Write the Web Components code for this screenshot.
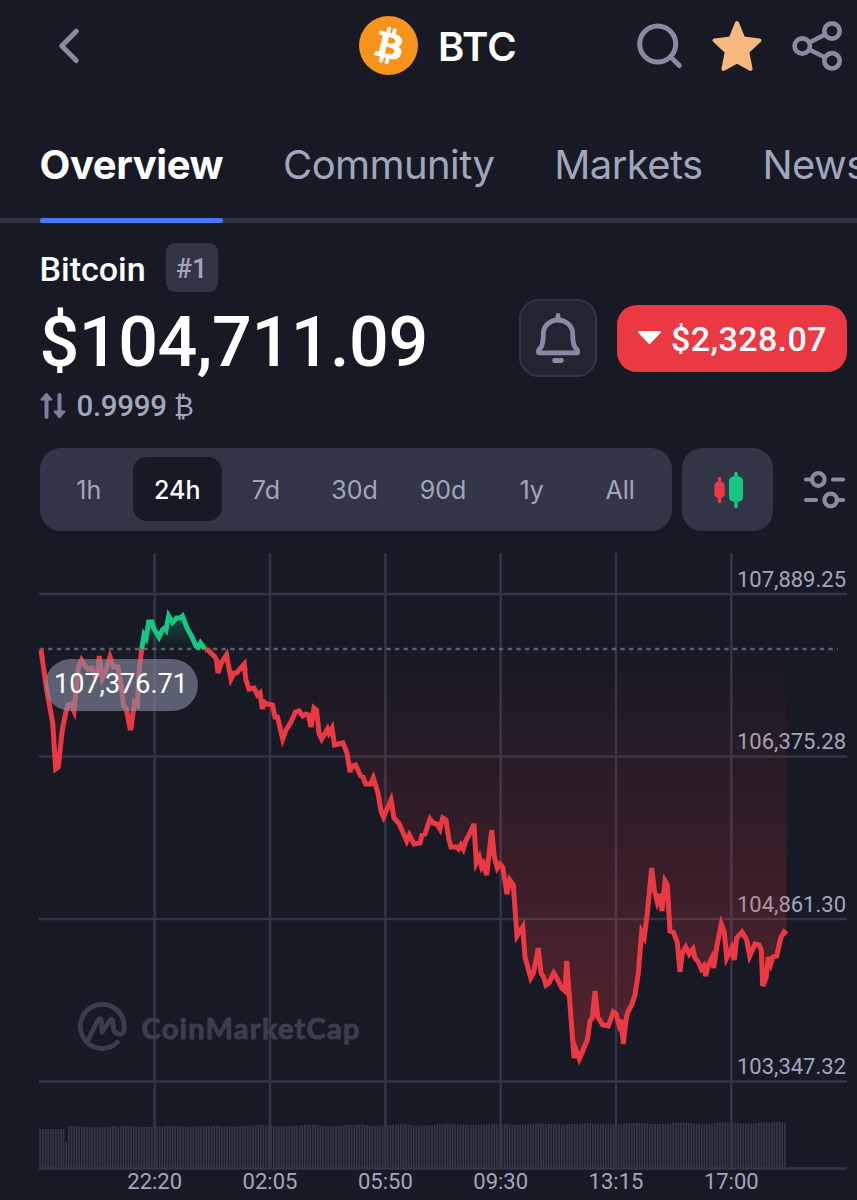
<!DOCTYPE html>
<html lang="en">
<head>
<meta charset="utf-8">
<title>BTC</title>
<style>
    html, body {
        margin: 0;
        background: #171924;
    }
    body {
        width: 857px;
        height: 1200px;
        overflow: hidden;
        color: #fff;
        font-family: Roboto, "Liberation Sans", sans-serif;
        --muted: #a1a7bb;
        --panel: #323546;
        --red: #ea3943;
    }
</style>
</head>
<body>
    <coin-page>
        <coin-header symbol="BTC"></coin-header>
        <coin-tabs>
            <coin-tab active>Overview</coin-tab>
            <coin-tab>Community</coin-tab>
            <coin-tab>Markets</coin-tab>
            <coin-tab>News</coin-tab>
        </coin-tabs>
        <coin-price>
            <span slot="name">Bitcoin</span>
            <span slot="rank">#1</span>
            <span slot="price">$104,711.09</span>
            <span slot="change">$2,328.07</span>
            <span slot="amount">0.9999 <span style="font-size: 27px; font-weight: 400">₿</span></span>
        </coin-price>
        <chart-controls ranges="1h,24h,7d,30d,90d,1y,All" selected="24h"></chart-controls>
        <price-chart></price-chart>
    </coin-page>

<script>
(function() {
    function define(name, html, setup) {
        const template = document.createElement("template");
        template.innerHTML = html;
        customElements.define(name, class extends HTMLElement {
            constructor() {
                super();
                this.attachShadow({mode: "open"});
                this.shadowRoot.appendChild(template.content.cloneNode(true));
            }

            connectedCallback() {
                if (setup) setup(this, this.shadowRoot);
            }
        });
    }

    define("coin-page", `
        <style>
            :host { display: flex; flex-direction: column; width: 857px; height: 1200px; overflow: hidden; }
        </style>
        <slot></slot>
    `);

    define("coin-header", `
        <style>
            :host { display: grid; grid-template-columns: 359px 1fr auto; align-items: center; height: 92px; box-sizing: border-box; padding-right: 14px; font-family: Inter, sans-serif; }
            svg { display: block; }
            .back { margin-left: 54px; }
            .coin { display: flex; align-items: center; gap: 20px; margin-top: -1px; font-size: 40px; font-weight: 600; line-height: 48px; }
            #symbol { padding-top: 3px; }
            .actions { display: flex; align-items: center; gap: 26px; }
        </style>
        <svg class="back" width="30" height="40" viewBox="54 26 30 40" fill="none" stroke="#858ca2" stroke-width="5" stroke-linecap="round" stroke-linejoin="round"><path d="M76.300 31.200 61.700 46 76.300 60.500"/></svg>
        <div class="coin">
            <svg width="59" height="59" viewBox="0 0 32 32"><circle cx="16" cy="16" r="16" fill="#f7931a"/><path fill="#fff" stroke="#fff" stroke-width=".3" d="M23.189 14.02c.314-2.096-1.283-3.223-3.465-3.975l.708-2.84-1.728-.43-.69 2.765c-.454-.114-.92-.22-1.385-.326l.695-2.783L15.596 6l-.708 2.839c-.376-.086-.746-.17-1.104-.26l.002-.009-2.384-.595-.46 1.846s1.283.294 1.256.312c.7.175.826.638.805 1.006l-.806 3.235c.048.012.11.03.18.057l-.183-.045-1.13 4.532c-.086.212-.303.531-.793.41.018.025-1.256-.313-1.256-.313l-.858 1.978 2.25.561c.418.105.828.215 1.231.318l-.715 2.872 1.727.43.708-2.84c.472.127.93.245 1.378.357l-.706 2.828 1.728.43.715-2.866c2.948.558 5.164.333 6.097-2.333.752-2.146-.037-3.385-1.588-4.192 1.13-.26 1.98-1.003 2.207-2.538zm-3.95 5.538c-.533 2.147-4.148.986-5.32.695l.95-3.805c1.172.293 4.929.872 4.37 3.11zm.535-5.569c-.487 1.953-3.495.96-4.47.717l.86-3.45c.975.243 4.118.696 3.61 2.733z"/></svg>
            <span id="symbol"></span>
        </div>
        <div class="actions">
            <svg width="50" height="52" viewBox="635 20 50 52" fill="none" stroke="#858ca2" stroke-width="5" stroke-linecap="round"><circle cx="657.700" cy="44" r="18"/><path d="m671.300 57.600 8 8"/></svg>
            <svg width="52" height="54" viewBox="711 19 52 54" fill="#f5b97f" stroke="#f5b97f" stroke-width="4" stroke-linejoin="round"><path d="m737 23 6.300 15.500 16.200 1.900-12.300 11.500 3.400 17-13.600-7.300-13.600 7.300 3.400-17-12.300-11.500 16.200-1.900z"/></svg>
            <svg width="54" height="54" viewBox="789 19 54 54" fill="none" stroke="#858ca2" stroke-width="4.700"><circle cx="802.300" cy="46" r="7.700"/><circle cx="832" cy="31" r="7.700"/><circle cx="832" cy="60.800" r="7.700"/><path d="m809.200 42.500 16-8M809.200 49.500l16 8"/></svg>
        </div>
    `, (host, root) => {
        root.getElementById("symbol").textContent = host.getAttribute("symbol");
    });

    define("coin-tabs", `
        <style>
            :host { display: flex; align-items: stretch; gap: 60px; height: 131px; box-sizing: border-box; padding: 26px 0 0 39.500px; overflow: hidden; white-space: nowrap; background: linear-gradient(#323546, #323546) bottom / 100% 5px no-repeat; }
        </style>
        <slot></slot>
    `);

    define("coin-tab", `
        <style>
            :host { display: flex; flex-direction: column; justify-content: space-between; flex: none; color: var(--muted); font: 400 40px/93px Inter, sans-serif; letter-spacing: -.6px; }
            :host([active]) { color: #fff; font-weight: 700; letter-spacing: -.42px; }
            .bar { height: 5px; border-radius: 3px; }
            :host([active]) .bar { background: #4878f5; }
        </style>
        <slot></slot>
        <div class="bar"></div>
    `);

    define("coin-price", `
        <style>
            :host { display: grid; grid-template-rows: 49px 92px 44px; padding: 20px 10px 0 39.500px; font-weight: 500; }
            div { display: flex; align-items: center; }
            svg { display: block; }
            .title { font-size: 34px; gap: 20px; }
            .title slot[name="name"] { display: block; padding-top: 2px; }
            .rank { justify-content: center; width: 52px; height: 49px; border-radius: 9px; background: var(--panel); color: var(--muted); font-size: 27px; }
            .rank slot { display: block; padding-top: 2px; }
            .main { justify-content: space-between; }
            .price { font-size: 70px; line-height: 82px; padding-top: 8px; letter-spacing: -.45px; }
            .side { gap: 20px; }
            .bell { justify-content: center; width: 78px; height: 78px; box-sizing: border-box; border: 2px solid var(--panel); border-radius: 20px; background: #222531; }
            .change { gap: 9px; width: 230px; height: 67px; box-sizing: border-box; padding-left: 20px; border-radius: 20px; background: var(--red); font-size: 34px; letter-spacing: .4px; }
            .change slot { display: block; padding-top: 2px; }
            .amount { gap: 10px; color: var(--muted); font-size: 29.500px; letter-spacing: -.3px; }
        </style>
        <div class="title"><slot name="name"></slot><div class="rank"><slot name="rank"></slot></div></div>
        <div class="main">
            <div class="price"><slot name="price"></slot></div>
            <div class="side">
                <div class="bell"><svg width="50" height="56" viewBox="533 310 50 56" fill="none" stroke="#858ca2" stroke-width="4.800" stroke-linecap="round" stroke-linejoin="round"><path d="M558 315.500v4M543.300 334a14.700 14 0 0 1 29.400 0c0 6 .3 10 2.300 13.200.8 1.200 2.500 2 2.500 3.300v2.300H538.500v-2.300c0-1.300 1.700-2.100 2.500-3.300 2-3.200 2.300-7.200 2.300-13.200zM554.500 360.500h7"/></svg></div>
                <div class="change"><svg width="25" height="16" viewBox="0 0 25 16" fill="#fff" stroke="#fff" stroke-width="2" stroke-linejoin="round"><path d="M2 2h21L12.500 13z"/></svg><slot name="change"></slot></div>
            </div>
        </div>
        <div class="amount"><svg width="27" height="28" viewBox="0 0 27 28" fill="none" stroke="#78819a" stroke-width="4" stroke-linecap="round" stroke-linejoin="round"><path d="M6.500 25V4M19.500 3v21"/><path d="M1.500 7.500 6.500 2l5 5.500zM14.500 19.500l5 5.500 5-5.500z" fill="#78819a" stroke-width="2"/></svg><slot name="amount"></slot></div>
    `);

    define("chart-controls", `
        <style>
            :host { display: flex; height: 83px; margin-top: 20px; padding: 0 11px 0 39.500px; }
            #ranges { display: grid; grid-template-columns: repeat(7, 1fr); align-items: center; width: 632px; box-sizing: border-box; padding: 0 7px 1px 5px; border-radius: 21px; background: var(--panel); color: var(--muted); font: 400 25px/66px Inter, sans-serif; text-align: center; }
            #ranges span { height: 64px; }
            .selected { border-radius: 14px; background: #171924; color: #fff; font-weight: 500; }
            .kind { display: flex; align-items: center; justify-content: center; width: 91px; margin-left: 10.500px; border-radius: 20px; background: var(--panel); }
            .filter { align-self: center; margin-left: auto; }
        </style>
        <div id="ranges"></div>
        <div class="kind"><svg width="32" height="40" viewBox="712 469.500 32 40"><path d="M719.500 478v23" stroke="#ea3943" stroke-width="3.500" stroke-linecap="round"/><rect x="714.300" y="481" width="10.400" height="16.500" rx="4.500" fill="#ea3943"/><path d="M736 473v33" stroke="#16c784" stroke-width="3.500" stroke-linecap="round"/><rect x="729" y="476" width="14" height="25" rx="4.500" fill="#16c784"/></svg></div>
        <svg class="filter" width="43" height="42" viewBox="803 469 43 42" fill="none" stroke="#858ca2" stroke-width="4.200" stroke-linecap="round"><circle cx="818.300" cy="479.500" r="6.300"/><circle cx="830.700" cy="500" r="6.300"/><path d="M806 479.500h5M833 479.500h10M806 500h10M838 500h5"/></svg>
    `, (host, root) => {
        host.getAttribute("ranges").split(",").forEach(range => {
            const item = document.createElement("span");
            item.textContent = range;
            if (range === host.getAttribute("selected")) item.className = "selected";
            root.getElementById("ranges").appendChild(item);
        });
    });

    // Price line, split where it crosses the opening price
    const open = 649;
    const early = "41,650 46.700,690 52.700,723 55.700,769 58.300,767 62.300,730 65.700,713 68,705 71,704 74,711 78.500,667 81.500,660 85,666 88,669 91.500,668 95.500,677 97.500,673 99.300,656 102.300,678 106,670 110,657 113.500,667 118,667 121.500,687 123.500,706 126,708 130,728 131,728 134.500,702 137.500,705 139,673 141.700,649";
    const above = "141.700,649 144,635 146,638 148.700,622 152,622 153.500,628 159,637 162.500,629.500 164.500,628 166,630 168.700,616 172.500,622.500 176.500,618 180,618 182.500,616 187,628 191.500,636 196,646 198.500,647 200.500,643 205,649";
    const late = "205,650 208,650 215,657 216.500,660 218,673 221.700,662 226.500,655 231,679 234,673 236.500,673 244.300,664 245.700,679 249,689 254,688 257.500,695 260,693 262.300,709 264,702 266.500,704 272.500,705 275,717 277.500,717 282.700,739 286,730 290.700,722.500 295.500,712 299,711 302.700,716 306,714 308.500,715 311,727 314,708 316.500,710 319,733 321.700,739 327.500,729 329,733 332,728 334.500,745 343,743 347,753 350,772 352,766 355.500,765 360.700,776 363,777 365.700,784 370.700,784 373.300,778 378,793 381,811 383.500,817 391,800 394,818 399,823.500 406.700,841 409.300,835 414,844 420,843 422,835 425,834 430,819 433,823 437,824 440,829 442.700,818 446,820 449,840 451,847 456.700,847 458.700,849 461,845 463.300,849 465.700,841 470,833 474,824 476.300,863 479.300,857 481.700,867 483.500,864 486.700,875 491.700,830 494.300,857 497.300,868 500,864 502.700,867 507,894 509.700,880 513.300,885 517,936 522.700,927 525,957 530.700,978 533.500,973 538.300,948 541,973 543.500,977 546,985 549,983 553.700,973 557.300,979 561.700,988 565,991 566.700,961 574,1058 575.700,1049 579.300,1059 587.300,1040 590,1021 592.300,1018 595,991 597.700,1017 602.700,1025 608.300,1026 613.300,1012 616,1014 619,1025 621,1020 623.300,1044 626,1020 627.700,1012 631.700,1005 635,995 638.300,973 641.700,932 644.300,937 647.300,913 651.700,868 654.300,890 657.300,902 660,894 662,911 665,881 667.300,885 670,931 673.300,932 677.300,942 680,972 682.300,953 685.700,947 689.300,954 693,949 695,958 698.300,962 701.300,969 703.700,966 705.700,976 708.300,965 711.700,958 713.700,968 716.700,947 721.300,924 724.300,932 726.700,958 731.700,948 734.300,960 736.700,938 742,932 746.700,940 749.700,956 755,944 759,945 761.300,950 762.700,986 766,978 768.300,957 770.700,964 772.700,957 776.700,956 780.700,938 784,932 786.700,934";

    define("price-chart", `
        <style>
            :host { display: block; flex: 1; }
            svg { display: block; font: 400 22px Roboto, sans-serif; }
            .line { fill: none; stroke: #ea3943; stroke-width: 5; stroke-miterlimit: 4; }
        </style>
        <svg id="chart" width="857" height="669" viewBox="0 531 857 669">
            <defs>
                <linearGradient id="loss" gradientUnits="userSpaceOnUse" x1="0" y1="649" x2="0" y2="1062"><stop offset="0" stop-color="#ea3943" stop-opacity="0"/><stop offset="1" stop-color="#ea3943" stop-opacity=".3"/></linearGradient>
                <linearGradient id="gain" gradientUnits="userSpaceOnUse" x1="0" y1="614" x2="0" y2="649"><stop offset="0" stop-color="#16c784" stop-opacity=".3"/><stop offset="1" stop-color="#16c784" stop-opacity="0"/></linearGradient>
            </defs>
            <path id="volume" stroke="#343747" stroke-width="1.700"/>
            <g id="grid" stroke="#323546" stroke-width="2.500"></g>
            <g id="labels" fill="#a1a7bb"></g>
            <g id="mark" fill="none" stroke="#3b3d4e" stroke-width="4.800" stroke-linecap="round" stroke-linejoin="round">
                <path d="M117.500 1042.300A22 22 0 1 1 124.300 1026c0 4 .2 8-4.500 8.300-4 .2-6-2.500-6.300-6l-.7-7c-.2-2.500-2-2.500-3.200-.5l-7.500 11.500-.8-11c-.2-3-2.200-3-3.700-.5L88 1040"/>
            </g>
            <text x="141.500" y="1038.500" textLength="218" fill="#3b3d4e" stroke="#3b3d4e" stroke-width="1" stroke-linejoin="round" style="font: 700 29px Lato, sans-serif">CoinMarketCap</text>
            <path d="M39.500 649H838" stroke="#5b5f70" stroke-width="2.500" stroke-dasharray="4.300 4.370"/>
            <g id="series"></g>
            <rect x="45" y="659" width="153" height="52" rx="26" fill="#858ca2" fill-opacity=".62"/>
            <text x="54" y="693" fill="#fff" textLength="134" style="font-size: 27px">107,376.71</text>
        </svg>
    `, (host, root) => {
        const rows = [[594, "107,889.25"], [756.5, "106,375.28"], [919, "104,861.30"], [1081.5, "103,347.32"]];
        const columns = [[154.7, "22:20"], [270, "02:05"], [385.4, "05:50"], [500.7, "09:30"], [616, "13:15"], [731.3, "17:00"]];
        let grid = '<path d="M39 1168.500H847"/>';
        let labels = "";

        rows.forEach(([y, text]) => {
            grid += `<path d="M39 ${y}H847"/>`;
            labels += `<text x="846" y="${y - 7.5}" text-anchor="end">${text}</text>`;
        });
        columns.forEach(([x, text]) => {
            grid += `<path d="M${x} 553V1169"/>`;
            labels += `<text x="${x}" y="1188.500" text-anchor="middle">${text}</text>`;
        });
        root.getElementById("grid").innerHTML = grid;
        root.getElementById("labels").innerHTML = labels;

        // One volume bar for each five minutes
        let bars = "";
        for (let i = 0; i < 288; i++) {
            const x = 40.3 + i * 2.594;
            let top = 1127 - i * 0.015 + Math.round(Math.sin(i * 0.35) + Math.sin(i * 1.1) * 0.4) * 0.6;
            if (i < 10) top = 1129;
            if (i === 10) top = 1142;
            bars += `M${x.toFixed(1)} ${top.toFixed(1)}V1168`;
        }
        root.getElementById("volume").setAttribute("d", bars);

        const area = (points, fill) => {
            const first = points.split(",")[0];
            const last = points.split(" ").pop().split(",")[0];
            return `<polygon points="${first},${open} ${points} ${last},${open}" fill="url(#${fill})"/>`;
        };
        root.getElementById("series").innerHTML =
            area(early, "loss") + area(above, "gain") + area(late, "loss") +
            `<polyline class="line" points="${early}"/><polyline class="line" points="${late}"/>` +
            `<polyline class="line" style="stroke: #16c784" points="${above}"/>`;
    });
})();
</script>
</body>
</html>
